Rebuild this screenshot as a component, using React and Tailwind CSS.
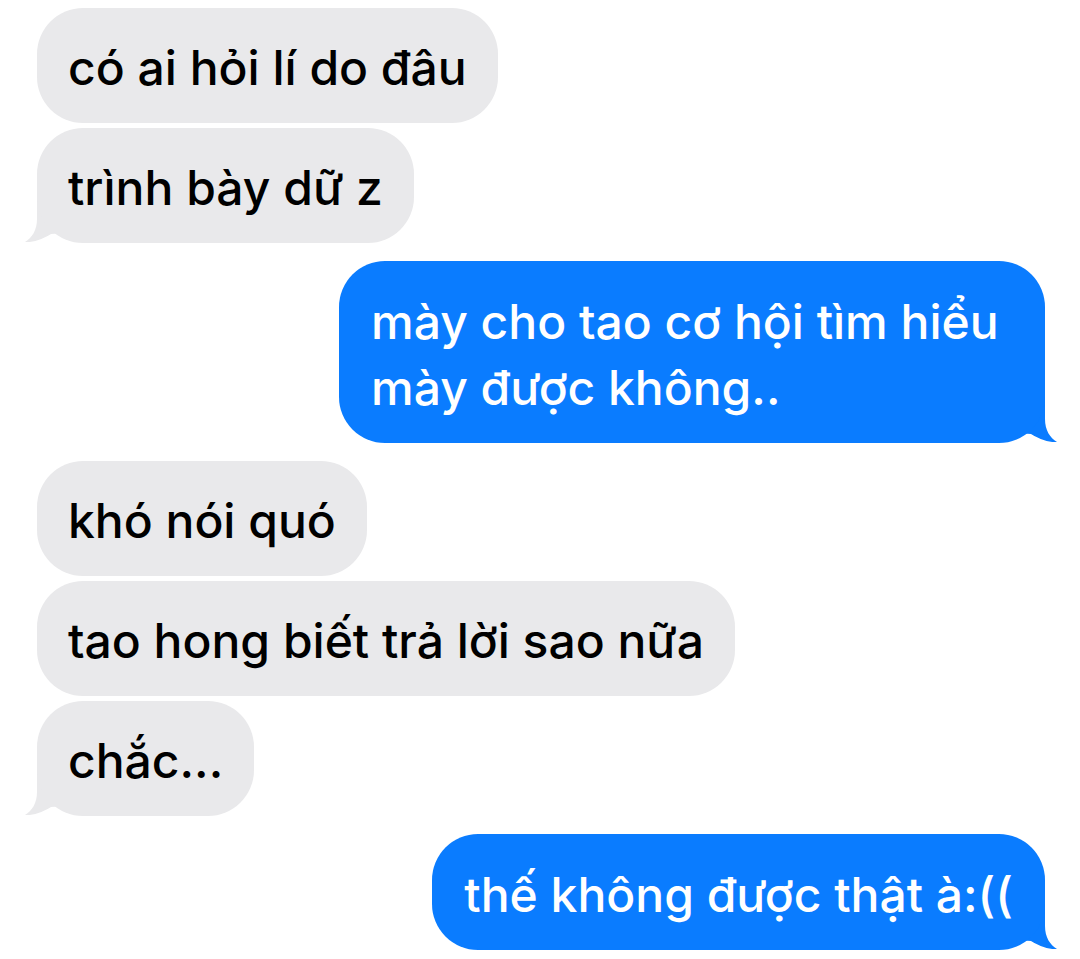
const FONT = { fontFamily: 'Inter, "Noto Sans", sans-serif' };

function TailLeft() {
  return (
    <svg
      className="absolute bottom-0 left-[-12px]"
      width="42"
      height="46"
      viewBox="0 0 42 46"
    >
      <path
        d="M12 0 L12 22 C12 33 7 41 0 45 C8 45.5 16 43 26 37 L40 36 L40 0 Z"
        fill="#e9e9eb"
      />
    </svg>
  );
}

function TailRight() {
  return (
    <svg
      className="absolute bottom-0 right-[-12px]"
      width="42"
      height="46"
      viewBox="0 0 42 46"
    >
      <path
        d="M30 0 L30 22 C30 33 35 41 42 45 C34 45.5 26 43 16 37 L2 36 L2 0 Z"
        fill="#0a7cff"
      />
    </svg>
  );
}

function Received({ text, tail }) {
  return (
    <div className="relative self-start">
      {tail && <TailLeft />}
      <div className="relative rounded-[46px] bg-[#e9e9eb] px-[31px] pt-[26px] pb-[22px] text-[48px] leading-[67px] font-medium text-black">
        {text}
      </div>
    </div>
  );
}

function Sent({ text, tail, className = "" }) {
  return (
    <div className={"relative self-end " + className}>
      {tail && <TailRight />}
      <div className="relative rounded-[46px] bg-[#0a7cff] px-[32px] pt-[28px] pb-[22px] text-[48px] leading-[66px] font-medium text-white">
        {text}
      </div>
    </div>
  );
}

export default function App() {
  return (
    <div
      className="flex min-h-[959px] w-[1080px] flex-col gap-[18px] bg-white pt-[8px] pr-[35px] pl-[37px]"
      style={FONT}
    >
      <div className="flex flex-col gap-[5px]">
        <Received text="có ai hỏi lí do đâu" />
        <Received text="trình bày dữ z" tail />
      </div>
      <Sent
        text="mày cho tao cơ hội tìm hiểu mày được không.."
        tail
        className="max-w-[706px]"
      />
      <div className="flex flex-col gap-[5px]">
        <Received text="khó nói quó" />
        <Received text="tao hong biết trả lời sao nữa" />
        <Received text="chắc..." tail />
      </div>
      <Sent text="thế không được thật à:((" tail />
    </div>
  );
}
